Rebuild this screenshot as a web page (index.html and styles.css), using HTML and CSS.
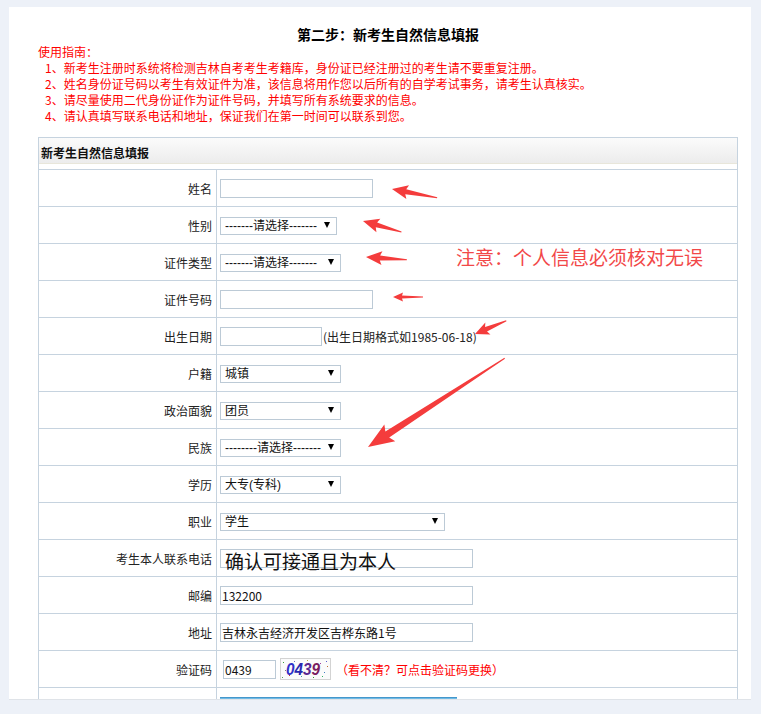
FILE: index.html
```html
<!DOCTYPE html>
<html lang="zh-CN">
<head>
  <meta charset="UTF-8">
  <meta name="viewport" content="width=device-width, initial-scale=1.0">
  <title>新考生自然信息填报</title>
  <link rel="stylesheet" href="styles.css">
</head>
<body>
  <div class="page">
    <div class="wrap">
      <h2 class="step-title">第二步：新考生自然信息填报</h2>

      <div class="guide">
        <div class="guide-title">使用指南：</div>
        <div class="guide-item">1、新考生注册时系统将检测吉林自考考生考籍库，身份证已经注册过的考生请不要重复注册。</div>
        <div class="guide-item">2、姓名身份证号码以考生有效证件为准，该信息将用作您以后所有的自学考试事务，请考生认真核实。</div>
        <div class="guide-item">3、请尽量使用二代身份证作为证件号码，并填写所有系统要求的信息。</div>
        <div class="guide-item">4、请认真填写联系电话和地址，保证我们在第一时间可以联系到您。</div>
      </div>

      <div class="box">
        <div class="box-head">新考生自然信息填报</div>
        <div class="box-body">
          <div class="row">
            <label class="cell-label" for="xm">姓名</label>
            <div class="cell-field"><input type="text" id="xm" class="txt w153"></div>
          </div>
          <div class="row">
            <label class="cell-label" for="xb">性别</label>
            <div class="cell-field">
              <span class="sel w117"><select id="xb"><option>-------请选择-------</option></select></span>
            </div>
          </div>
          <div class="row">
            <label class="cell-label" for="zjlx">证件类型</label>
            <div class="cell-field">
              <span class="sel w121"><select id="zjlx"><option>-------请选择-------</option></select></span>
            </div>
          </div>
          <div class="row">
            <label class="cell-label" for="zjhm">证件号码</label>
            <div class="cell-field"><input type="text" id="zjhm" class="txt w153"></div>
          </div>
          <div class="row">
            <label class="cell-label" for="csrq">出生日期</label>
            <div class="cell-field">
              <input type="text" id="csrq" class="txt w102">
              <span class="hint">(出生日期格式如1985-06-18)</span>
            </div>
          </div>
          <div class="row">
            <label class="cell-label" for="hj">户籍</label>
            <div class="cell-field">
              <span class="sel w121"><select id="hj"><option>城镇</option><option>农村</option></select></span>
            </div>
          </div>
          <div class="row">
            <label class="cell-label" for="zzmm">政治面貌</label>
            <div class="cell-field">
              <span class="sel w121"><select id="zzmm"><option>团员</option></select></span>
            </div>
          </div>
          <div class="row">
            <label class="cell-label" for="mz">民族</label>
            <div class="cell-field">
              <span class="sel w121"><select id="mz"><option>--------请选择-------</option></select></span>
            </div>
          </div>
          <div class="row">
            <label class="cell-label" for="xl">学历</label>
            <div class="cell-field">
              <span class="sel w121"><select id="xl"><option>大专(专科)</option></select></span>
            </div>
          </div>
          <div class="row">
            <label class="cell-label" for="zy">职业</label>
            <div class="cell-field">
              <span class="sel w225"><select id="zy"><option>学生</option></select></span>
            </div>
          </div>
          <div class="row">
            <label class="cell-label" for="lxdh">考生本人联系电话</label>
            <div class="cell-field">
              <span class="phone-wrap">
                <input type="text" id="lxdh" class="txt w253">
                <span class="phone-note">确认可接通且为本人</span>
              </span>
            </div>
          </div>
          <div class="row">
            <label class="cell-label" for="yb">邮编</label>
            <div class="cell-field"><input type="text" id="yb" class="txt w253" value="132200"></div>
          </div>
          <div class="row">
            <label class="cell-label" for="dz">地址</label>
            <div class="cell-field"><input type="text" id="dz" class="txt w253" value="吉林永吉经济开发区吉桦东路1号"></div>
          </div>
          <div class="row">
            <label class="cell-label" for="yzm">验证码</label>
            <div class="cell-field">
              <input type="text" id="yzm" class="txt w53 code-input" value="0439">
              <svg class="captcha" width="51" height="22" viewBox="0 0 51 22">
                <rect x="0.5" y="0.5" width="50" height="21" fill="#fbfbfb" stroke="#a8a8a8" stroke-dasharray="1 1"/>
                <g>
                  <rect x="3" y="4" width="1" height="1" fill="#3a9a3a"/>
                  <rect x="9" y="17" width="1" height="1" fill="#c03030"/>
                  <rect x="14" y="3" width="1" height="1" fill="#7070c0"/>
                  <rect x="21" y="18" width="1" height="1" fill="#40a0a0"/>
                  <rect x="27" y="2" width="1" height="1" fill="#b0b030"/>
                  <rect x="33" y="19" width="1" height="1" fill="#30a030"/>
                  <rect x="40" y="5" width="1" height="1" fill="#a040a0"/>
                  <rect x="44" y="14" width="1" height="1" fill="#4080c0"/>
                  <rect x="47" y="8" width="1" height="1" fill="#c07030"/>
                  <rect x="5" y="12" width="1" height="1" fill="#808080"/>
                  <rect x="42" y="18" width="1" height="1" fill="#30b060"/>
                  <rect x="37" y="10" width="1" height="1" fill="#d04040"/>
                  <rect x="46" y="3" width="1" height="1" fill="#6060d0"/>
                  <rect x="2" y="19" width="1" height="1" fill="#50a050"/>
                  <rect x="17" y="10" width="1" height="1" fill="#90c090"/>
                </g>
                <text x="6" y="17" font-family="Liberation Sans, sans-serif" font-size="16" font-weight="bold" font-style="italic" textLength="34" lengthAdjust="spacingAndGlyphs"><tspan fill="#3030c8">0</tspan><tspan fill="#2828b0">4</tspan><tspan fill="#5a2890">3</tspan><tspan fill="#7a1c60">9</tspan></text>
              </svg>
              <span class="code-tip">（看不清？可点击验证码更换）</span>
            </div>
          </div>
          <div class="row row-submit">
            <div class="cell-label"></div>
            <div class="cell-field"><div class="btn-bar"></div></div>
          </div>
        </div>
      </div>
    </div>
  </div>

  <!-- screenshot annotations -->
  <div class="notes">
    <svg class="arrows" width="761" height="714" viewBox="0 0 761 714">
      <g fill="#f43c3c">
        <polygon transform="translate(392 189) rotate(11)" points="0,0 16,-7 14,-2.5 46,-0.5 46,0.5 14,2.5 16,7"/>
        <polygon transform="translate(363 221) rotate(16)" points="0,0 16,-7 14,-2.5 40,-0.5 40,0.5 14,2.5 16,7"/>
        <polygon transform="translate(366 257) rotate(4)" points="0,0 16,-7 14,-2.5 41,-0.5 41,0.5 14,2.5 16,7"/>
        <polygon transform="translate(393 297) rotate(0)" points="0,0 10,-4.5 9,-1.5 30,-0.5 30,0.5 9,1.5 10,4.5"/>
        <polygon transform="translate(475 334) rotate(-23)" points="0,0 14,-6.5 12,-2.5 34,-0.5 34,0.5 12,2.5 14,6.5"/>
        <polygon transform="translate(368 447) rotate(-33)" points="0,0 26,-10 23,-3.5 163,-0.5 163,0.5 23,3.5 26,10"/>
      </g>
    </svg>
    <span class="note-text">注意：个人信息必须核对无误</span>
  </div>
</body>
</html>
```

FILE: styles.css
```css
html, body {
  margin: 0;
  padding: 0;
}

body {
  position: relative;
  width: 761px;
  height: 714px;
  overflow: hidden;
  background-color: #edf1f8;
  font-family: "SimSun", "Noto Sans CJK SC", sans-serif;
  font-size: 12px;
  color: #222;
}

.page {
  width: 742px;
  height: 692px;
  margin: 7px 0 0 9px;
  background-color: #fff;
  border-bottom: 1px solid #dfe3e8;
  overflow: hidden;
}

.wrap {
  width: 700px;
  margin-left: 29px;
  padding-top: 17px;
}

.step-title {
  margin: 0;
  font-size: 14px;
  font-weight: bold;
  line-height: 20px;
  text-align: center;
  color: #000;
}

.guide {
  color: #ff0000;
  line-height: 16px;
}

.guide-item {
  padding-left: 7px;
}

/* form box */
.box {
  margin-top: 13px;
  border: 1px solid #c6d3df;
  border-bottom: none;
}

.box-head {
  height: 26px;
  box-sizing: border-box;
  padding: 6px 0 0 2px;
  line-height: 18px;
  font-weight: bold;
  color: #111;
  background: linear-gradient(#fbfbfb, #ececec);
  border-bottom: 1px solid #e8e6da;
}

.box-body {
  padding-top: 5px;
}

.row {
  display: grid;
  grid-template-columns: 178px 1fr;
  height: 37px;
  box-sizing: border-box;
  border-top: 1px solid #c6d3df;
}

.cell-label {
  display: flex;
  align-items: center;
  justify-content: flex-end;
  padding-right: 4px;
  border-right: 1px solid #c6d3df;
  color: #222;
}

.cell-field {
  display: flex;
  align-items: center;
  padding-left: 3px;
}

.row-submit .cell-field {
  align-items: flex-start;
  padding-top: 9px;
}

/* inputs */
.txt {
  height: 19px;
  box-sizing: border-box;
  margin: 0;
  padding: 0 1px;
  border: 1px solid #bccad6;
  border-radius: 0;
  font-family: "SimSun", "Noto Sans CJK SC", sans-serif;
  font-size: 12px;
  color: #111;
  background: #fff;
  outline: none;
}

.w53 { width: 53px; }
.w102 { width: 102px; }
.w117 { width: 117px; }
.w121 { width: 121px; }
.w153 { width: 153px; }
.w225 { width: 225px; }
.w253 { width: 253px; }

.hint {
  margin-left: 1px;
  color: #222;
}

.sel {
  position: relative;
  display: inline-block;
  height: 18px;
}

.sel select {
  -webkit-appearance: none;
  appearance: none;
  width: 100%;
  height: 100%;
  margin: 0;
  padding: 0 0 0 4px;
  border: 1px solid #bccad6;
  border-radius: 0;
  background: #fff;
  font-family: "Liberation Sans", "Noto Sans CJK SC", sans-serif;
  font-size: 12px;
  color: #111;
  outline: none;
}

.sel::after {
  content: "";
  position: absolute;
  right: 7px;
  top: 6px;
  width: 0;
  height: 0;
  border-left: 3.5px solid transparent;
  border-right: 3.5px solid transparent;
  border-top: 6px solid #000;
}

.phone-wrap {
  position: relative;
  display: inline-block;
  height: 19px;
}

.phone-note {
  position: absolute;
  left: 5px;
  top: 2px;
  font-family: "Noto Sans CJK SC", sans-serif;
  font-size: 19px;
  line-height: 19px;
  white-space: nowrap;
  color: #111;
}

.code-input {
  margin-left: 3px;
}

.captcha {
  display: block;
  margin-left: 4px;
}

.code-tip {
  margin-left: 5px;
  color: #ff0000;
}

.btn-bar {
  width: 237px;
  height: 30px;
  box-sizing: border-box;
  border-top: 1px solid #4597cb;
  background: linear-gradient(#70bbe6, #3f8fc6);
}

/* annotations over the screenshot */
.notes {
  position: absolute;
  left: 0;
  top: 0;
  width: 761px;
  height: 714px;
  pointer-events: none;
}

.arrows {
  position: absolute;
  left: 0;
  top: 0;
}

.note-text {
  position: absolute;
  left: 456px;
  top: 247px;
  font-family: "Noto Sans CJK SC", sans-serif;
  font-size: 19px;
  line-height: 19px;
  white-space: nowrap;
  color: #f24848;
}
```
